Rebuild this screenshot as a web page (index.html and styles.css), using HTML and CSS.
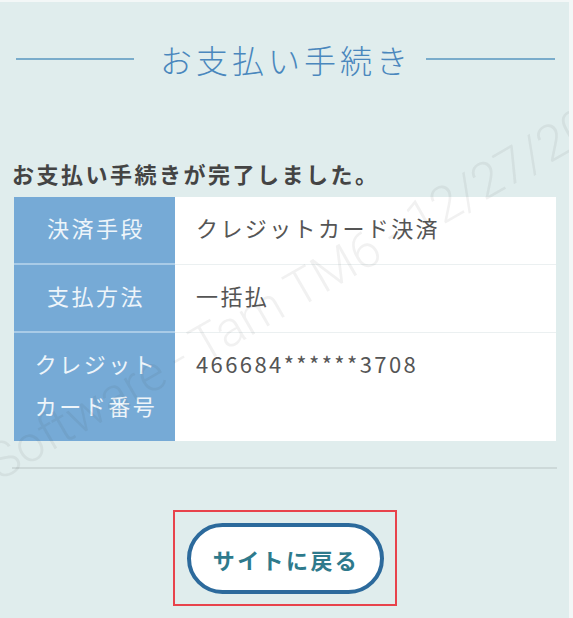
FILE: index.html
```html
<!DOCTYPE html>
<html lang="ja">
<head>
<meta charset="utf-8">
<title>お支払い手続き</title>
<link rel="stylesheet" href="styles.css">
</head>
<body>
<div class="page">
  <h1 class="heading">
    <span class="rule rule-left"></span>
    <span class="heading-text">お支払い手続き</span>
    <span class="rule rule-right"></span>
  </h1>
  <p class="lead">お支払い手続きが完了しました。</p>
  <table class="info">
    <tr>
      <th>決済手段</th>
      <td>クレジットカード決済</td>
    </tr>
    <tr>
      <th>支払方法</th>
      <td>一括払</td>
    </tr>
    <tr>
      <th>クレジット<br>カード番号</th>
      <td>466684******3708</td>
    </tr>
  </table>
  <hr class="divider">
  <div class="actions">
    <div class="highlight">
      <a class="back-btn" href="#">サイトに戻る</a>
    </div>
  </div>
  <div class="watermark">Software - Tam TM6 - 12/27/20</div>
</div>
</body>
</html>
```
FILE: styles.css
```css
html, body {
  margin: 0;
  padding: 0;
}
body {
  background: #f3f7f7;
  font-family: "Noto Sans CJK JP", "Noto Sans", sans-serif;
  overflow: hidden;
}
.page {
  position: relative;
  margin: 2px 4px 0 0;
  height: 616px;
  background: #e0eded;
  padding: 0 12px;
  box-sizing: border-box;
  overflow: hidden;
}
.heading {
  display: flex;
  align-items: center;
  margin: 35px 2px 0 4px;
  height: 44px;
  font-weight: 300;
}
.rule {
  height: 2px;
  background: #7aaccb;
}
.rule-left {
  width: 118px;
  margin-right: 26px;
}
.rule-right {
  flex: 1;
  margin-left: 14px;
}
.heading-text {
  font-size: 32px;
  line-height: 44px;
  letter-spacing: 4px;
  color: #4a87bd;
  font-weight: 300;
}
.lead {
  margin: 77px 0 9px 0;
  font-size: 22px;
  line-height: 30px;
  font-weight: 700;
  letter-spacing: 2.5px;
  color: #444444;
}
.info {
  width: calc(100% - 3px);
  margin-left: 2px;
  border-collapse: collapse;
  background: #ffffff;
}
.info th {
  width: 161px;
  box-sizing: border-box;
  background: #76aad6;
  color: #eef5fa;
  font-weight: 400;
  font-size: 22px;
  line-height: 42px;
  letter-spacing: 2.5px;
  padding: 9px 0 15px 3px;
  text-align: center;
  vertical-align: top;
}
.info td {
  font-size: 22px;
  line-height: 42px;
  letter-spacing: 2.4px;
  color: #555555;
  padding: 9px 21px 15px;
  vertical-align: top;
}
.info tr + tr th {
  border-top: 2px solid #a9cbe7;
}
.info tr + tr td {
  border-top: 1px solid #ebf0f1;
}
.divider {
  border: 0;
  height: 2px;
  background: #cdd9d9;
  margin: 26px 0 0 0;
}
.actions {
  display: flex;
  justify-content: center;
  margin-top: 41px;
}
.highlight {
  border: 2px solid #e8434c;
  padding: 11px 11px 10px 12px;
}
.back-btn {
  display: flex;
  align-items: center;
  justify-content: center;
  width: 197px;
  height: 71px;
  box-sizing: border-box;
  border: 4px solid #2c6a9c;
  border-radius: 36px;
  background: #ffffff;
  color: #2e7a8c;
  font-size: 22px;
  font-weight: 700;
  letter-spacing: 2.4px;
  text-decoration: none;
  padding-left: 2px;
}
.watermark {
  position: absolute;
  left: 0;
  top: 436px;
  font-family: Roboto, "Liberation Sans", sans-serif;
  font-weight: 300;
  font-size: 50px;
  line-height: 52px;
  white-space: nowrap;
  color: rgba(60, 60, 60, 0.07);
  transform: rotate(-30deg);
  transform-origin: 0 44px;
  pointer-events: none;
}
```
